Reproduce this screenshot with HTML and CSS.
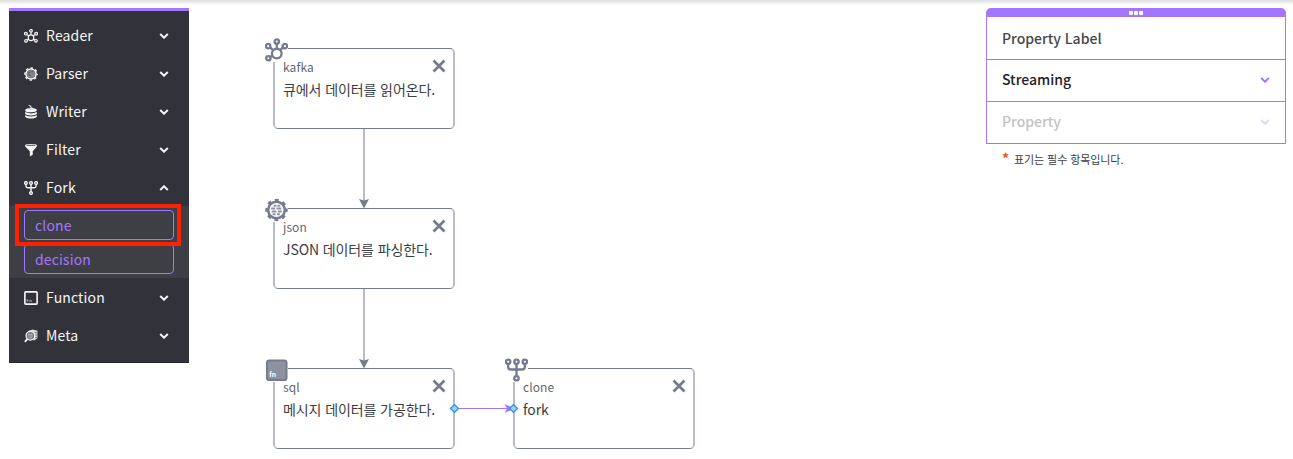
FILE: index.html
```html
<!DOCTYPE html>
<html lang="ko">
<head>
<meta charset="utf-8">
<title>Pipeline editor</title>
<link rel="stylesheet" href="styles.css">
</head>
<body>
<svg class="defs" width="0" height="0" aria-hidden="true">
  <symbol id="hub" viewBox="0 0 24 24">
    <g fill="none" stroke="currentColor" stroke-width="2.1">
      <circle cx="12" cy="3.2" r="2.3"/><circle cx="3.2" cy="8" r="2.3"/><circle cx="20.8" cy="8" r="2.3"/>
      <circle cx="3.5" cy="20.3" r="2.3"/><circle cx="20.5" cy="20.3" r="2.3"/><circle cx="12" cy="15" r="4.8"/>
      <path d="M12 5.5v4.7M5.3 9.2l2.8 3M18.7 9.2l-2.8 3M5.3 19l3-1.5M18.7 19l-3-1.5"/>
    </g>
  </symbol>
  <symbol id="node-hub" viewBox="0 0 24 24">
    <g fill="none" stroke="currentColor" stroke-width="2.4">
      <circle cx="12.3" cy="3.2" r="2.3"/><circle cx="3.3" cy="8" r="2.3"/><circle cx="20.8" cy="8" r="2.3"/>
      <circle cx="3.5" cy="20.6" r="2.3"/><circle cx="12.3" cy="15.7" r="5"/>
      <path d="M12.3 5.5v5M5.3 9.3l3.3 3M18.7 9.3l-2.8 2.8M5.3 19.3l2.5-1.4"/>
    </g>
  </symbol>
  <symbol id="gear" viewBox="0 0 24 24">
    <circle cx="12" cy="12" r="8.700" fill="none" stroke="currentColor" stroke-width="2.600"/>
    <circle cx="12" cy="12" r="10.400" fill="none" stroke="currentColor" stroke-width="2.600" stroke-dasharray="4.084 4.084" stroke-dashoffset="2.042"/>
  </symbol>
  <symbol id="fork" viewBox="0 0 24 24">
    <g fill="none" stroke="currentColor" stroke-width="2.4">
      <circle cx="3.3" cy="3.4" r="2.3"/><circle cx="12" cy="3.4" r="2.3"/><circle cx="20.7" cy="3.4" r="2.3"/><circle cx="12" cy="20.6" r="2.3"/>
      <path d="M12 6v12M3.3 6v2.5q0 3 3 3h11.4q3 0 3-3V6"/>
    </g>
  </symbol>
  <symbol id="chevron" viewBox="0 0 10 6">
    <path d="M1.2 1l3.8 3.7L8.800 1" fill="none" stroke="currentColor" stroke-width="2"/>
  </symbol>
  <symbol id="close" viewBox="0 0 12 12">
    <path d="M1.300 1.300l9.400 9.400M10.700 1.300l-9.400 9.400" stroke="currentColor" stroke-width="2.300"/>
  </symbol>
</svg>

<div class="top-shadow"></div>
<main class="editor">
  <nav class="sidebar">
    <div class="menu-item"><svg class="menu-icon"><use href="#hub"/></svg><span class="menu-label">Reader</span><svg class="chevron"><use href="#chevron"/></svg></div>
    <div class="menu-item">
      <svg class="menu-icon" viewBox="0 0 24 24"><use href="#gear"/><circle cx="12" cy="12" r="7" fill="#85868a"/><path d="M8 9h3M13 8h3M7 12h3M9 15h3" stroke="#4b4c51" stroke-width="1.500"/></svg>
      <span class="menu-label">Parser</span><svg class="chevron"><use href="#chevron"/></svg></div>
    <div class="menu-item">
      <svg class="menu-icon" viewBox="0 0 24 24"><path d="M2 9q0-3 6-3.500l4 3 4-3q6 .5 6 3.500t-10 3.500T2 9zM2 12q10 5 20 0v4q-10 4-20 0zM2 17.500q10 4.500 20 0V20q-2 3-10 3T2 20z" fill="currentColor"/><path d="M8 1q5 0 4.500 6M9.500 5l3 3 3-3" fill="none" stroke="currentColor" stroke-width="1.800"/></svg>
      <span class="menu-label">Writer</span><svg class="chevron"><use href="#chevron"/></svg></div>
    <div class="menu-item">
      <svg class="menu-icon" viewBox="0 0 24 24"><path d="M2 3.500Q2 1.500 12 1.500t10 2V6l-7 8v6l-5 3v-9L2 6z" fill="currentColor"/><path d="M4.500 4h15" stroke="#32333a" stroke-width="1.400"/></svg>
      <span class="menu-label">Filter</span><svg class="chevron"><use href="#chevron"/></svg></div>
    <div class="menu-item"><svg class="menu-icon"><use href="#fork"/></svg><span class="menu-label">Fork</span><svg class="chevron chevron-open"><use href="#chevron"/></svg></div>
    <div class="submenu">
      <div class="submenu-item">clone</div>
      <div class="submenu-item">decision</div>
      <div class="highlight"></div>
    </div>
    <div class="menu-item">
      <svg class="menu-icon" viewBox="0 0 24 24"><rect x="1.500" y="1.500" width="21" height="21" rx="1.500" fill="none" stroke="currentColor" stroke-width="2.800"/><path d="M5.500 19v-5M5 16h3M10 19v-3h2.500v3" fill="none" stroke="#a5a5a8" stroke-width="1.500"/></svg>
      <span class="menu-label">Function</span><svg class="chevron"><use href="#chevron"/></svg></div>
    <div class="menu-item">
      <svg class="menu-icon" viewBox="0 0 24 24"><path d="M8 3l7-2 8 2v13l-6 4z" fill="#d8d8d8"/><path d="M17 7l6-1M18 11l5-1M18 15l5-1" stroke="#55565b" stroke-width="1.300"/><circle cx="11" cy="11.500" r="7.500" fill="#77787c" stroke="currentColor" stroke-width="2.200"/><path d="M7 9h8M7 12h8M8 15h6" stroke="#d0d0d0" stroke-width="1.200"/><path d="M6 17l-4.500 5" stroke="currentColor" stroke-width="3"/></svg>
      <span class="menu-label">Meta</span><svg class="chevron"><use href="#chevron"/></svg></div>
  </nav>

  <section class="canvas">
    <svg class="edges" width="797" height="459" viewBox="189 0 797 459">
      <g fill="none" stroke="#b8bac8" stroke-width="2"><path d="M364 129v73M364 289v73"/></g>
      <g fill="#747b8e"><path d="M359 199l5 1.500 5-1.500-5 9.500zM359 359l5 1.500 5-1.500-5 9.500z"/></g>
      <path d="M455 408.500h52" stroke="#a276ff"/>
      <path d="M504.500 404l10 4.500-10 4.500 2.500-4.500z" fill="#a276ff"/>
    </svg>
    <article class="node node-kafka">
      <svg class="node-icon"><use href="#node-hub"/></svg>
      <header class="node-head"><span>kafka</span><svg class="node-close"><use href="#close"/></svg></header>
      <div class="node-title">큐에서 데이터를 읽어온다.</div>
    </article>
    <article class="node node-json">
      <svg class="node-icon" viewBox="0 0 24 24"><circle cx="12" cy="12" r="9" fill="#fff"/><use href="#gear"/><path d="M9 7.500h3M13 7.500h3M6.500 10.500h4M12 10.500h5M7 13.500h5M13.500 13.500h4M8 16.500h3M12.500 16.500h3" stroke="#8d93a3" stroke-width="2"/></svg>
      <header class="node-head"><span>json</span><svg class="node-close"><use href="#close"/></svg></header>
      <div class="node-title">JSON 데이터를 파싱한다.</div>
    </article>
    <article class="node node-sql">
      <svg class="node-icon" viewBox="0 0 24 24"><rect x="2" y="2" width="20.500" height="20.500" rx="2.500" fill="#8c92a2" stroke="#747b8e" stroke-width="2"/><text class="fn" x="4.500" y="19.500">fn</text></svg>
      <header class="node-head"><span>sql</span><svg class="node-close"><use href="#close"/></svg></header>
      <div class="node-title">메시지 데이터를 가공한다.</div>
    </article>
    <article class="node node-clone">
      <svg class="node-icon"><use href="#fork"/></svg>
      <header class="node-head"><span>clone</span><svg class="node-close"><use href="#close"/></svg></header>
      <div class="node-title">fork</div>
    </article>
    <svg class="edges" width="797" height="459" viewBox="189 0 797 459">
      <path d="M450.500 408.500l4-4 4 4-4 4zM509.500 408.500l4-4 4 4-4 4z" fill="#a3cde2" stroke="#1b91ff" stroke-width="1.200"/>
    </svg>
  </section>

  <aside class="properties">
    <div class="panel-handle"><i></i><i></i><i></i></div>
    <div class="panel-row panel-label">Property Label</div>
    <div class="panel-row panel-select"><span>Streaming</span><svg class="chevron"><use href="#chevron"/></svg></div>
    <div class="panel-row panel-disabled"><span>Property</span><svg class="chevron"><use href="#chevron"/></svg></div>
    <p class="note"><span class="asterisk">*</span>표기는 필수 항목입니다.</p>
  </aside>
</main>
</body>
</html>
```
FILE: styles.css
```css
* { box-sizing: border-box; }
body {
  margin: 0;
  background: #fff;
  font-family: "Noto Sans CJK KR", "Noto Sans", sans-serif;
  font-size: 14px;
  overflow: hidden;
}
.defs { position: absolute; }
.top-shadow { height: 5px; margin-bottom: 3px; background: linear-gradient(#dedede, #fff); }
.editor { display: flex; align-items: flex-start; height: 451px; }

.sidebar {
  width: 180px;
  height: 355px;
  margin-left: 9px;
  padding-top: 6px;
  background: #32333a;
  border-top: 3px solid #a276ff;
  border-bottom: 1px solid #28292f;
  color: #f5f5f5;
  letter-spacing: .15px;
}
.menu-item { display: flex; align-items: center; height: 38px; padding: 0 20px 0 15px; }
.menu-icon { width: 14px; height: 14px; margin-right: 8px; }
.menu-label { flex: 1; padding-bottom: 2px; line-height: 22px; }
.chevron { width: 10px; height: 6px; }
.chevron-open { transform: rotate(180deg); }
.submenu {
  position: relative;
  display: flex;
  flex-direction: column;
  gap: 4px;
  height: 72px;
  margin-top: -1px;
  margin-bottom: 1px;
  padding: 4px 15px;
  background: #3e3f45;
}
.submenu-item {
  height: 30px;
  padding-left: 10px;
  border: 1px solid #a276ff;
  border-radius: 4px;
  color: #a276ff;
  line-height: 29px;
}
.highlight { position: absolute; left: 6px; top: -2px; width: 166px; height: 42px; border: 4px solid #ff2000; }

.canvas { position: relative; flex: 1; height: 459px; margin-top: -8px; }
.edges { position: absolute; left: 0; top: 0; }
.node {
  position: absolute;
  width: 182px;
  height: 81px;
  padding: 8px 8px;
  border: 1px solid #747b8e;
  border-left: 2px solid #b8bac8;
  border-right: 2px solid #b8bac8;
  border-radius: 5px;
  background: #fff;
  color: #3c3d43;
}
.node-kafka { left: 84px; top: 48px; }
.node-json { left: 84px; top: 208px; }
.node-sql { left: 84px; top: 368px; }
.node-clone { left: 324px; top: 368px; }
.node-icon { position: absolute; left: -10px; top: -11px; width: 23px; height: 24px; color: #747b8e; background: #fff; }
.node-head { display: flex; justify-content: space-between; height: 20px; color: #66676c; font-size: 12px; line-height: 20px; letter-spacing: .1px; }
.node-close { width: 14px; height: 14px; margin-top: 2px; margin-right: -1px; color: #747b8e; }
.node-title { line-height: 25px; letter-spacing: -.1px; white-space: nowrap; }
.fn { fill: #fff; font-size: 7px; font-weight: 700; }

.properties { width: 300px; margin-right: 7px; }
.panel-handle {
  display: flex;
  justify-content: center;
  gap: 1px;
  height: 9px;
  padding-top: 3px;
  background: #a276ff;
  border-radius: 5px 5px 0 0;
}
.panel-handle i { width: 4px; height: 4px; background: #fff; border-radius: 1px; }
.panel-row {
  display: flex;
  justify-content: space-between;
  align-items: center;
  height: 42px;
  padding: 0 15px 1px;
  border: 1px solid #a276ff;
  border-top: 0;
  font-weight: 500;
}
.panel-row span { padding-bottom: 2px; }
.panel-label { height: 43px; color: #45464a; }
.panel-select { color: #202124; }
.panel-disabled { color: #c3c3c3; }
.properties .chevron { color: #a276ff; }
.panel-disabled .chevron { opacity: .3; }
.note { margin: 6px 0 0 16px; color: #3c3d43; font-size: 11px; line-height: 18px; letter-spacing: -.08px; }
.asterisk { display: inline-block; width: 12px; color: #f0501e; font-size: 14px; font-weight: 700; line-height: 14px; }
```
